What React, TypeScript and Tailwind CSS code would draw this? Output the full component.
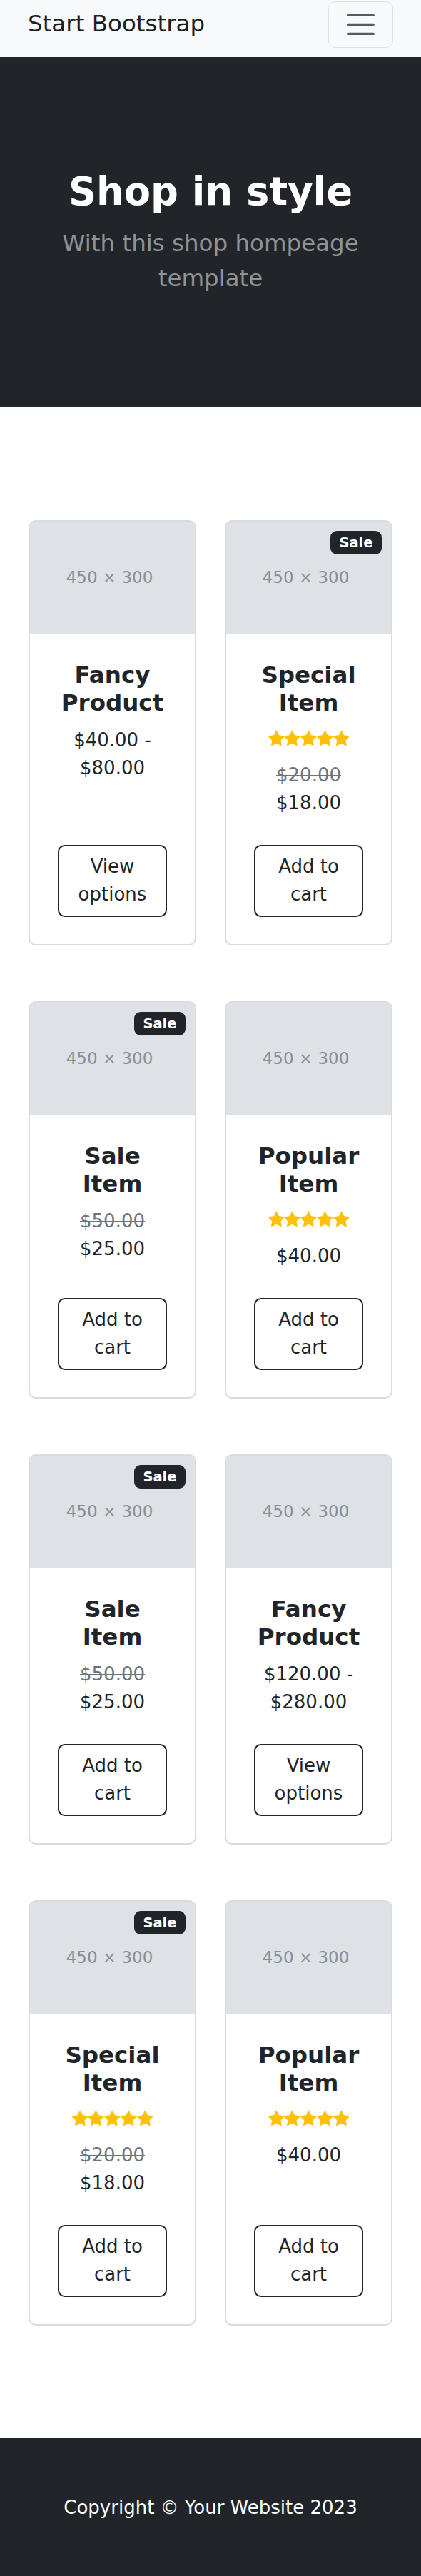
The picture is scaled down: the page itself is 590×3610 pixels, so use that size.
type Product = {
  name: string;
  sale?: boolean;
  stars?: boolean;
  oldPrice?: string;
  price: string;
  action: string;
};

const products: Product[] = [
  { name: "Fancy Product", price: "$40.00 - $80.00", action: "View options" },
  { name: "Special Item", sale: true, stars: true, oldPrice: "$20.00", price: "$18.00", action: "Add to cart" },
  { name: "Sale Item", sale: true, oldPrice: "$50.00", price: "$25.00", action: "Add to cart" },
  { name: "Popular Item", stars: true, price: "$40.00", action: "Add to cart" },
  { name: "Sale Item", sale: true, oldPrice: "$50.00", price: "$25.00", action: "Add to cart" },
  { name: "Fancy Product", price: "$120.00 - $280.00", action: "View options" },
  { name: "Special Item", sale: true, stars: true, oldPrice: "$20.00", price: "$18.00", action: "Add to cart" },
  { name: "Popular Item", stars: true, price: "$40.00", action: "Add to cart" },
];

const StarFill = () => (
  <svg viewBox="0 0 16 16" className="w-[22.75px] h-[22.75px]" fill="currentColor">
    <path d="M3.612 15.443c-.386.198-.824-.149-.746-.592l.83-4.73L.173 6.765c-.329-.314-.158-.888.283-.95l4.898-.696L7.538.792c.197-.39.73-.39.927 0l2.184 4.327 4.898.696c.441.062.612.636.282.95l-3.522 3.356.83 4.73c.078.443-.36.79-.746.592L8 13.187l-4.389 2.256z" />
  </svg>
);

const ProductCard = ({ product }: { product: Product }) => {
  return (
    <div className="relative flex flex-col border-2 border-[#dadbdc] rounded-[10px] bg-white">
      {product.sale && (
        <div className="absolute top-[13px] right-[13px] bg-[#212529] text-white text-[19.5px] font-bold leading-none px-[12.5px] py-[7px] rounded-[9px]">
          Sale
        </div>
      )}
      <div className="h-[157px] bg-[#dee2e6] rounded-t-[8px] flex items-center justify-center">
        <span className="text-[23px] text-[#898f95] pr-[8px]">450 × 300</span>
      </div>
      <div className="flex-1 p-[39px] text-center">
        <h5 className="text-[32.5px] leading-[39px] font-bold mb-[13px]">{product.name}</h5>
        {product.stars && (
          <div className="flex justify-center items-start pt-[5px] h-[36px] mb-[13px] text-[#ffc107]">
            <StarFill />
            <StarFill />
            <StarFill />
            <StarFill />
            <StarFill />
          </div>
        )}
        <div className="text-[26px] leading-[39px]">
          {product.oldPrice && (
            <span className="text-[#6c757d] line-through">{product.oldPrice}</span>
          )}
          {product.oldPrice && " "}
          {product.price}
        </div>
      </div>
      <div className="px-[39px] pb-[38px] text-center">
        <button className="w-full border-2 border-[#212529] rounded-[9.75px] px-[19.5px] py-[9.5px] text-[26px] leading-[39px] text-[#212529] bg-transparent">
          {product.action}
        </button>
      </div>
    </div>
  );
};

export default function App() {
  return (
    <div className="min-h-screen bg-white font-['DejaVu_Sans',sans-serif] text-[#212529]">
      <nav className="h-[80px] bg-[#f8f9fa] px-[39px] flex justify-between items-start">
        <a className="pt-[9px] text-[32.5px] leading-[49px] text-[#1d1e1f]" href="#!">
          Start Bootstrap
        </a>
        <button className="mt-[2px] w-[91px] h-[65px] border-[1.6px] border-[#dfe0e1] rounded-[10px] flex items-center justify-center">
          <svg viewBox="0 0 30 30" className="w-[48.75px] h-[48.75px]">
            <path
              stroke="rgba(33,37,41,0.75)"
              strokeLinecap="round"
              strokeMiterlimit="10"
              strokeWidth="2"
              d="M4 7h22M4 15h22M4 23h22"
            />
          </svg>
        </button>
      </nav>

      <header className="bg-[#212529] pt-[156px] pb-[156px] px-[39px]">
        <div className="text-center text-white">
          <h1 className="text-[54.3px] leading-[65px] font-bold mb-[16px]">Shop in style</h1>
          <p className="text-[32.5px] leading-[48.75px] text-white/50">With this shop hompeage template</p>
        </div>
      </header>

      <section className="pt-[158px] pb-[158px]">
        <div className="grid grid-cols-2 gap-x-[40px] gap-y-[78px] px-[40px]">
          {products.map((p, i) => (
            <ProductCard key={i} product={p} />
          ))}
        </div>
      </section>

      <footer className="bg-[#212529] py-[78px]">
        <p className="text-center text-white text-[26px] leading-[39px]">Copyright © Your Website 2023</p>
      </footer>
    </div>
  );
}
